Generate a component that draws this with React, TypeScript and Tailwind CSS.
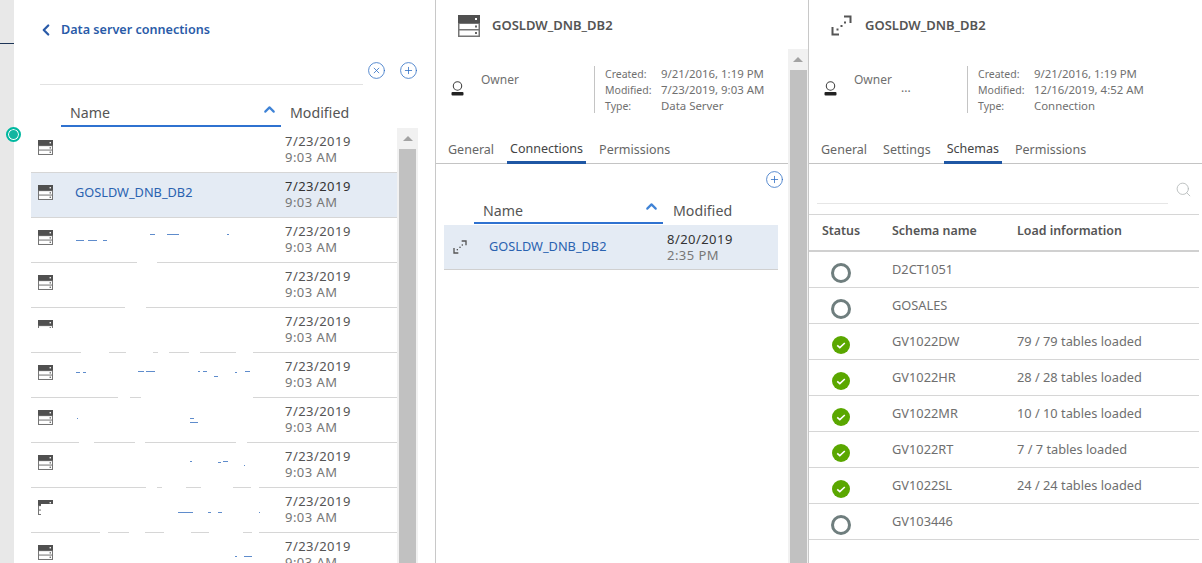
import { ChevronLeft, ChevronUp, CirclePlus, CircleX, Search } from 'lucide-react'

type Patch = [number, number]
type Speck = [number, number, number]

interface ServerRow {
  name?: string
  selected?: boolean
  gaps?: Patch[]
  specks?: Speck[]
}

const serverRows: ServerRow[] = [
  {},
  { name: 'GOSLDW_DNB_DB2', selected: true },
  {
    gaps: [[106, 126]],
    specks: [[45, 22, 8], [57, 22, 9], [72, 22, 4], [119, 16, 5], [136, 16, 12], [196, 16, 2]]
  },
  { gaps: [[94, 115]] },
  {
    gaps: [[50, 78], [95, 122], [127, 138], [158, 169], [205, 222]]
  },
  {
    gaps: [[87, 99], [110, 222]],
    specks: [[45, 19, 4], [52, 19, 3], [107, 18, 6], [115, 18, 9], [167, 18, 2], [183, 23, 4], [172, 18, 4], [204, 19, 2], [214, 18, 5]]
  },
  {
    gaps: [[48, 63], [104, 114], [205, 216]],
    specks: [[46, 20, 1], [159, 20, 4], [159, 24, 8]]
  },
  {
    gaps: [[115, 126], [131, 155], [170, 202], [220, 228]],
    specks: [[159, 18, 2], [187, 19, 3], [192, 18, 5], [213, 22, 1]]
  },
  {
    gaps: [[69, 77], [98, 114], [133, 160], [178, 212], [221, 228]],
    specks: [[147, 24, 15], [177, 24, 3], [187, 24, 4], [228, 24, 1]]
  },
  { specks: [[204, 23, 2], [213, 23, 8]] }
]

const schemaRows = [
  { name: 'D2CT1051', status: 'idle', info: '' },
  { name: 'GOSALES', status: 'idle', info: '' },
  { name: 'GV1022DW', status: 'ok', info: '79 / 79 tables loaded' },
  { name: 'GV1022HR', status: 'ok', info: '28 / 28 tables loaded' },
  { name: 'GV1022MR', status: 'ok', info: '10 / 10 tables loaded' },
  { name: 'GV1022RT', status: 'ok', info: '7 / 7 tables loaded' },
  { name: 'GV1022SL', status: 'ok', info: '24 / 24 tables loaded' },
  { name: 'GV103446', status: 'idle', info: '' }
]

function ServerIcon({ size = 15 }: { size?: number }): React.JSX.Element {
  return (
    <svg width={size} height={size} viewBox="0 0 22 22" className="shrink-0">
      <rect x="0" y="0" width="22" height="22" fill="#757575" />
      <rect x="0" y="0" width="22" height="8" fill="#505050" />
      <rect x="1.5" y="9" width="19" height="5" fill="#ffffff" />
      <rect x="1.5" y="15.5" width="19" height="5" fill="#ffffff" />
      <rect x="17" y="3" width="2" height="2" fill="#ffffff" />
      <rect x="17" y="10.5" width="2" height="2" fill="#666666" />
      <rect x="17" y="17" width="2" height="2" fill="#666666" />
    </svg>
  )
}

function ConnectionIcon({ size = 21 }: { size?: number }): React.JSX.Element {
  return (
    <svg width={size} height={size} viewBox="0 0 21 21" fill="none" className="shrink-0">
      <path d="M13 1.5h6.5V8" stroke="#555555" strokeWidth="2" />
      <path d="M1.5 12v7.5H8" stroke="#555555" strokeWidth="2" />
      <rect x="5.5" y="13.5" width="2" height="2" fill="#555555" />
      <rect x="9.5" y="10" width="2" height="2" fill="#555555" />
      <rect x="13" y="6.5" width="2" height="2" fill="#555555" />
    </svg>
  )
}

function OwnerIcon(): React.JSX.Element {
  return (
    <svg width="13" height="15" viewBox="0 0 13 15" fill="none" className="shrink-0">
      <circle cx="6.5" cy="5" r="4.2" stroke="#444444" strokeWidth="1.1" />
      <rect x="0.5" y="11" width="12" height="3.5" rx="1" fill="#222222" />
    </svg>
  )
}

function StatusIcon({ status }: { status: string }): React.JSX.Element {
  if (status === 'ok') {
    return (
      <svg width="18" height="18" viewBox="0 0 18 18" className="mt-[1px]">
        <circle cx="9" cy="9" r="9" fill="#5aa700" />
        <path d="M5.2 9.4 7.8 11.6 12.8 7" fill="none" stroke="#ffffff" strokeWidth="1.6" />
      </svg>
    )
  }
  return <div className="w-5 h-5 rounded-full border-[3px] border-[#6f7e7e]" />
}

function SortHeader({
  nameWidth,
  modifiedGap,
  textTop
}: {
  nameWidth: string
  modifiedGap: string
  textTop: string
}): React.JSX.Element {
  return (
    <div className="flex items-start text-[14.2px] text-[#555555]">
      <div className={`${nameWidth} h-[25px] border-b-2 border-[#2f72d0] pl-[9px] flex justify-between`}>
        <span className={`${textTop} leading-5`}>Name</span>
        <ChevronUp size={17} strokeWidth={3} className="text-[#3f83d6] mr-[3px] -mt-[1px]" />
      </div>
      <span className={`${modifiedGap} ${textTop} leading-5`}>Modified</span>
    </div>
  )
}

function Meta({ modified, type, owner }: { modified: string; type: string; owner?: string }): React.JSX.Element {
  return (
    <div className="flex items-start">
      <div className="w-[158px] flex items-start">
        <div className="mt-[14px] ml-[15px]">
          <OwnerIcon />
        </div>
        <div className="relative ml-[17px] mt-[5px] text-xs text-[#6f6f6f] leading-4">
          Owner
          {owner && <span className="absolute left-[47px] top-[10px] leading-3">{owner}</span>}
        </div>
      </div>
      <div className="border-l border-[#c4c4c4] h-[47px] pl-[10px] -mt-[1px] grid grid-cols-[56px_auto] text-[10.5px] text-[#707070] leading-4">
        <span>Created:</span>
        <span className="text-[11.4px]">9/21/2016, 1:19 PM</span>
        <span>Modified:</span>
        <span className="text-[11.4px]">{modified}</span>
        <span>Type:</span>
        <span className="text-[11.4px]">{type}</span>
      </div>
    </div>
  )
}

function Tabs({ items, active }: { items: string[]; active: string }): React.JSX.Element {
  return (
    <div className="flex h-[29px] border-b border-[#c4c4c4] pl-[9px] text-[12.5px] text-[#666666]">
      {items.map((item) => (
        <div
          key={item}
          className={
            item === active
              ? 'h-[29px] px-[3px] mr-[10px] border-b-[3px] border-[#1f57a4] text-[#444444] leading-[27px]'
              : 'h-[29px] px-[3px] mr-[10px] leading-[29px]'
          }
        >
          {item}
        </div>
      ))}
    </div>
  )
}

function ScrollBar({ className }: { className: string }): React.JSX.Element {
  return (
    <div className={`${className} shrink-0 bg-[#f1f1f1] flex flex-col items-center`}>
      <div className="h-[21px] flex items-center justify-center">
        <div className="w-0 h-0 border-x-[5px] border-x-transparent border-b-[5px] border-b-[#a3a3a3]" />
      </div>
      <div className="flex-1 w-[17px] bg-[#c1c1c1]" />
    </div>
  )
}

export default function App(): React.JSX.Element {
  return (
    <div className="relative flex h-[563px] w-[1202px] overflow-hidden bg-white font-['Noto_Sans',sans-serif]">
      {/* left rail */}
      <div className="w-[14px] shrink-0 bg-[#e8e8e8]">
        <div className="mt-[43px] h-px bg-[#1d3557]" />
      </div>
      <div className="absolute left-[6px] top-[127px] w-[15px] h-[15px] rounded-full border-2 border-[#00b8a0] bg-[#12b5a0] ring-1 ring-inset ring-white" />

      {/* connections list */}
      <div className="w-[422px] shrink-0 border-r border-[#c8c8c8] flex flex-col">
        <div className="flex items-center h-[59px] pl-[23px] pt-[1px]">
          <ChevronLeft size={18} strokeWidth={3} className="text-[#2a5ba8]" />
          <span className="ml-[6px] text-[12.6px] font-semibold text-[#2a5ba8]">Data server connections</span>
        </div>
        <div className="flex items-center ml-[26px] h-[26px]">
          <div className="w-[323px] h-[26px] border-b border-[#e2e2e2]" />
          <CircleX size={19} strokeWidth={1} className="ml-[4px] -mt-[4px] text-[#2f6fc4]" />
          <CirclePlus size={19} strokeWidth={1} className="ml-[13px] -mt-[3px] text-[#2f6fc4]" />
        </div>
        <div className="ml-[47px] mt-[17px]">
          <SortHeader nameWidth="w-[220px]" modifiedGap="ml-[9px]" textTop="pt-[1px]" />
        </div>
        <div className="flex flex-1 mt-[1px] pl-[17px] min-h-0">
          <div className="w-[366px] shrink-0">
            {serverRows.map((row, index) => (
              <div
                key={index}
                className={`relative flex h-[45px] items-center border-b border-[#d6d6d6] pl-[7px] ${
                  row.selected ? 'bg-[#e4ebf4]' : 'bg-white'
                }`}
              >
                <div className="-mt-[5px]">
                  <ServerIcon />
                </div>
                <span className="ml-[22px] -mt-[4px] w-[210px] text-[12.75px] text-[#2a62b0]">{row.name}</span>
                <div className="pb-[2px] text-[13px] leading-[16px] tracking-[0.45px]">
                  <div className={row.selected ? 'text-[#333333]' : 'text-[#555555]'}>7/23/2019</div>
                  <div className="text-[#777777]">9:03 AM</div>
                </div>
                {row.gaps?.map(([from, to]) => (
                  <span
                    key={from}
                    className="absolute -bottom-px h-px bg-white"
                    style={{ left: from, width: to - from }}
                  />
                ))}
                {row.specks?.map(([x, y, w]) => (
                  <span
                    key={`${x}-${y}`}
                    className="absolute h-px bg-[#5f8ccc]"
                    style={{ left: x, top: y, width: w }}
                  />
                ))}
                {index === 4 && <span className="absolute left-[7px] top-[20px] w-[15px] h-[12px] bg-white" />}
                {index === 8 && <span className="absolute left-[10px] top-[16px] w-[12px] h-[16px] bg-white" />}
              </div>
            ))}
          </div>
          <ScrollBar className="w-[21px]" />
        </div>
      </div>

      {/* data server detail */}
      <div className="w-[373px] shrink-0 border-r border-[#c8c8c8] flex flex-col">
        <div className="flex items-center h-[49px] pl-[22px] pt-[2px]">
          <ServerIcon size={22} />
          <span className="ml-[12px] text-[13px] font-semibold text-[#555555]">GOSLDW_DNB_DB2</span>
        </div>
        <div className="flex flex-1 min-h-0">
          <div className="w-[352px] shrink-0">
            <div className="pt-[18px] h-[86px]">
              <Meta modified="7/23/2019, 9:03 AM" type="Data Server" />
            </div>
            <Tabs items={['General', 'Connections', 'Permissions']} active="Connections" />
            <div className="flex justify-end pr-[4px] pt-[6px] h-[35px]">
              <CirclePlus size={19} strokeWidth={1} className="text-[#2f6fc4]" />
            </div>
            <div className="ml-[38px]">
              <SortHeader nameWidth="w-[189px]" modifiedGap="ml-[10px]" textTop="pt-[2px]" />
            </div>
            <div className="ml-[8px] w-[334px] h-[45px] mt-[1px] flex items-center bg-[#e4ebf4] border-b border-[#d0d0d0] pl-[9px]">
              <ConnectionIcon size={14} />
              <span className="ml-[22px] w-[178px] text-[12.75px] text-[#2a62b0]">GOSLDW_DNB_DB2</span>
              <div className="text-[13px] leading-[16px] tracking-[0.45px]">
                <div className="text-[#333333]">8/20/2019</div>
                <div className="text-[#777777]">2:35 PM</div>
              </div>
            </div>
          </div>
          <ScrollBar className="w-[20px]" />
        </div>
      </div>

      {/* connection detail */}
      <div className="flex-1 min-w-0 flex flex-col">
        <div className="flex items-center h-[49px] pl-[22px] pt-[2px]">
          <ConnectionIcon />
          <span className="ml-[13px] text-[13px] font-semibold text-[#555555]">GOSLDW_DNB_DB2</span>
        </div>
        <div className="pt-[18px] h-[86px]">
          <Meta modified="12/16/2019, 4:52 AM" type="Connection" owner="..." />
        </div>
        <Tabs items={['General', 'Settings', 'Schemas', 'Permissions']} active="Schemas" />
        <div className="h-[50px] pl-[8px] pr-[10px] flex items-start">
          <div className="w-[352px] h-[40px] border-b border-[#e6e6e6]" />
          <Search size={17} strokeWidth={1.2} className="ml-[7px] mt-[17px] text-[#b4b8b8]" />
        </div>
        <div className="mr-[3px] border-t border-[#d6d6d6]">
          <div className="flex items-center h-[37px] border-b-2 border-[#d0d0d0] pb-[3px] text-[12.4px] font-semibold text-[#555555]">
            <span className="w-[83px] pl-[13px]">Status</span>
            <span className="w-[125px]">Schema name</span>
            <span>Load information</span>
          </div>
          {schemaRows.map((row) => (
            <div key={row.name} className="flex h-[36px] border-b border-[#d6d6d6] text-[12.8px] text-[#6f6f6f]">
              <div className="w-[83px] pl-[22px] pt-[11px]">
                <div className="w-5 flex justify-center">
                  <StatusIcon status={row.status} />
                </div>
              </div>
              <span className="w-[125px] pt-[9px] leading-4">{row.name}</span>
              <span className="pt-[9px] leading-4">{row.info}</span>
            </div>
          ))}
        </div>
      </div>
    </div>
  )
}
